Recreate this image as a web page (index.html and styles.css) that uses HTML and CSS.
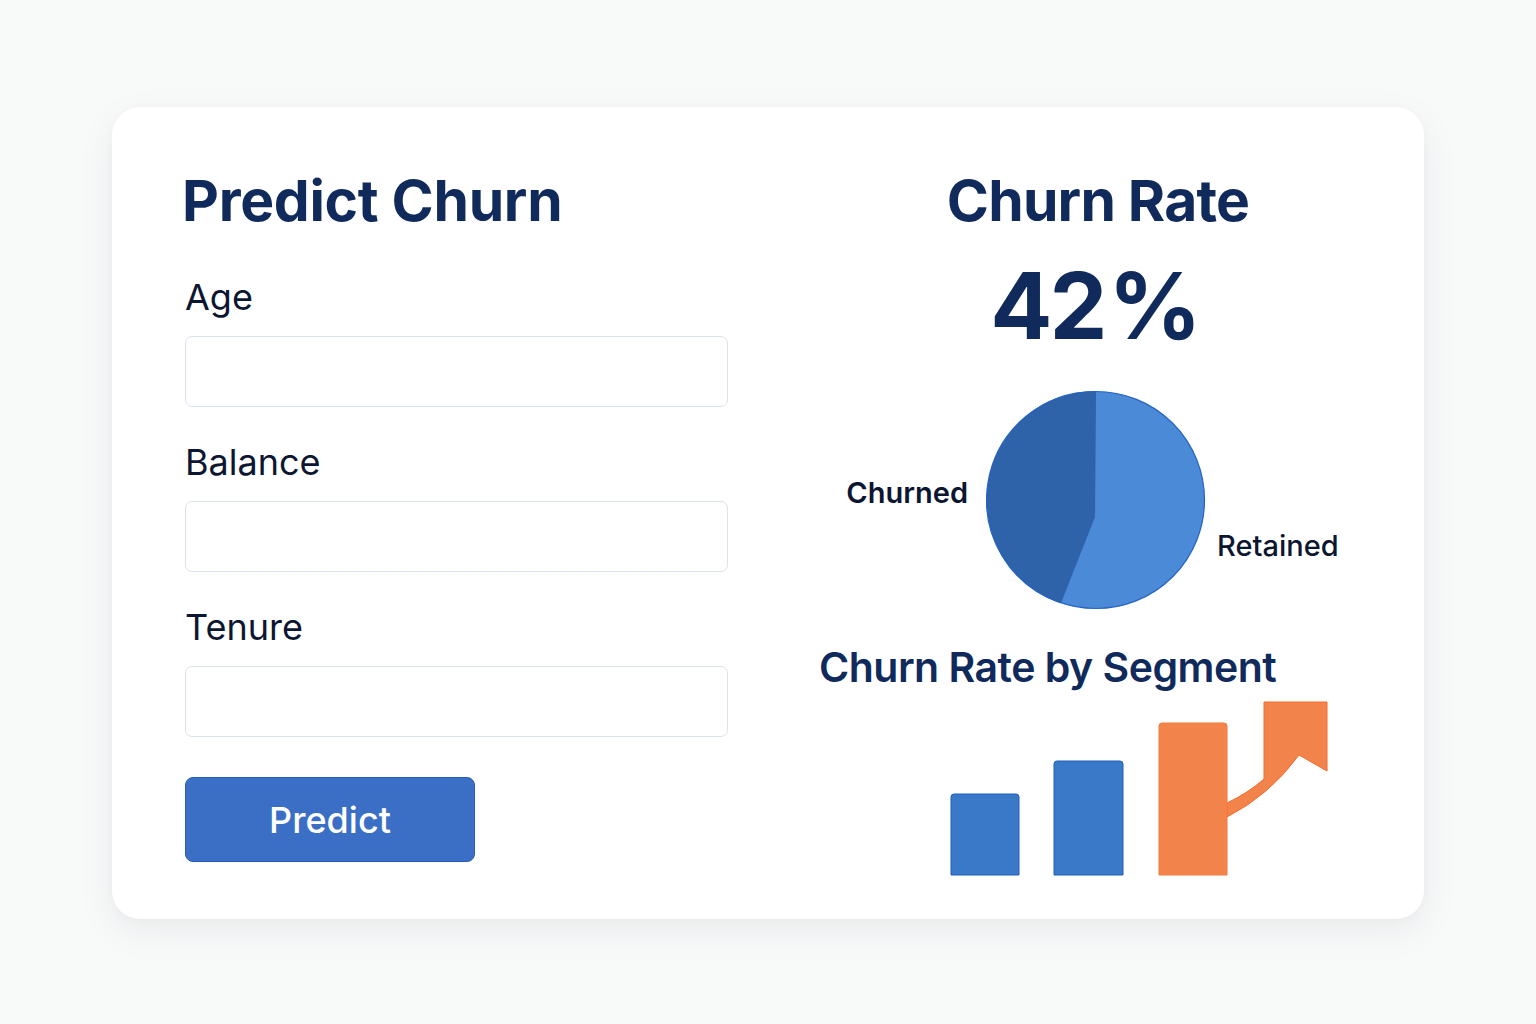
FILE: index.html
```html
<!DOCTYPE html>
<html lang="en">
<head>
<meta charset="utf-8">
<title>Predict Churn</title>
<link rel="stylesheet" href="styles.css">
</head>
<body>
<main class="card">
  <section class="form-col">
    <h1 class="title">Predict Churn</h1>
    <div class="field">
      <label class="label" for="age">Age</label>
      <input class="input" id="age" type="text">
    </div>
    <div class="field">
      <label class="label" for="balance">Balance</label>
      <input class="input" id="balance" type="text">
    </div>
    <div class="field">
      <label class="label" for="tenure">Tenure</label>
      <input class="input" id="tenure" type="text">
    </div>
    <button class="btn" type="button">Predict</button>
  </section>
  <section class="stats-col">
    <h2 class="title">Churn Rate</h2>
    <div class="big">42<span class="pct">%</span></div>
    <div class="pie-row">
      <span class="pie-label churned">Churned</span>
      <svg class="pie" width="220" height="220" viewBox="0 0 220 220">
        <circle cx="110" cy="110" r="108.5" fill="#4a8ad7" stroke="#2563c4" stroke-width="1.2"/>
        <path d="M109,127 L110,1.5 A108.5,108.5 0 0,0 75,213 Z" fill="#2e62a9"/>
        <path d="M110,1.5 A108.5,108.5 0 0,0 75,213" fill="none" stroke="#2563c4" stroke-width="1.2"/>
      </svg>
      <span class="pie-label retained">Retained</span>
    </div>
    <h3 class="seg-title">Churn Rate by Segment</h3>
    <svg class="chart" width="400" height="180" viewBox="0 0 400 180">
      <path d="M11,177 V99 Q11,96 14,96 H76 Q79,96 79,99 V177 Z" fill="#3a78c8" stroke="#1f5fbf" stroke-width="1"/>
      <path d="M114,177 V66 Q114,63 117,63 H180 Q183,63 183,66 V177 Z" fill="#3a78c8" stroke="#1f5fbf" stroke-width="1"/>
      <path d="M287,105 Q308,95 324,81 L324,4 L387,4 L387,73 L359,57 Q330,97 287,119 Z" fill="#f2844b" stroke="#f26a2a" stroke-width="1" stroke-linejoin="round"/>
      <path d="M219,177 V28 Q219,25 222,25 H284 Q287,25 287,28 V177 Z" fill="#f2844b" stroke="#f47a3c" stroke-width="1"/>
    </svg>
  </section>
</main>
</body>
</html>
```
FILE: styles.css
```css
* { box-sizing: border-box; }
html, body { margin: 0; padding: 0; }
body {
  background: #f8f9f9;
  font-family: Inter, "Noto Sans", "Liberation Sans", sans-serif;
  width: 1536px;
  height: 1024px;
  overflow: hidden;
}
.card {
  margin: 107px 0 0 112px;
  width: 1312px;
  height: 812px;
  background: #ffffff;
  border-radius: 28px;
  box-shadow: 0 12px 40px rgba(20, 30, 50, 0.06), 0 2px 8px rgba(20, 30, 50, 0.03);
  display: flex;
}
.form-col {
  width: 684px;
  padding: 65px 0 0 73px;
  display: flex;
  flex-direction: column;
}
.title {
  margin: 0;
  font-size: 57px;
  line-height: 58px;
  font-weight: 700;
  color: #112a5c;
  letter-spacing: -0.8px;
}
.form-col .title { margin-left: -3px; margin-bottom: 49px; letter-spacing: -0.3px; }
.field {
  display: flex;
  flex-direction: column;
  margin-bottom: 37px;
}
.label {
  font-size: 36px;
  line-height: 36px;
  font-weight: 400;
  color: #0c1631;
  margin-bottom: 21px;
}
.input {
  width: 543px;
  height: 71px;
  border: 1.5px solid #dbe2ee;
  border-radius: 7px;
  background: #fff;
  font: inherit;
}
.btn {
  margin-top: 3px;
  width: 290px;
  height: 85px;
  background: #3a6fc5;
  border: 1.5px solid #2a5cb8;
  border-radius: 8px;
  color: #fff;
  font-family: inherit;
  font-size: 36px;
  font-weight: 500;
  padding: 0;
}
.stats-col {
  width: 600px;
  padding-top: 65px;
  display: flex;
  flex-direction: column;
  align-items: center;
}
.stats-col .title { margin-bottom: 29px; margin-left: 4px; }
.big {
  font-size: 92px;
  line-height: 94px;
  font-weight: 700;
  color: #112a5c;
  margin-bottom: 37px;
  letter-spacing: -3px;
}
.pct { margin-left: 4px; letter-spacing: 0; }
.pie-row {
  width: 600px;
  display: grid;
  grid-template-columns: 1fr 220px 1fr;
  height: 220px;
}
.pie-label {
  font-size: 29px;
  line-height: 29px;
  color: #0c1631;
}
.churned {
  justify-self: end;
  margin: 88px 18px 0 0;
  font-weight: 600;
}
.retained {
  justify-self: start;
  margin: 141px 0 0 11px;
  font-weight: 500;
}
.pie { display: block; }
.seg-title {
  align-self: flex-start;
  margin: 36px 0 0 23px;
  font-size: 41px;
  line-height: 42px;
  font-weight: 600;
  color: #112a5c;
  letter-spacing: -0.5px;
}
.chart {
  align-self: flex-start;
  display: block;
  margin: 10px 0 0 144px;
}
```
